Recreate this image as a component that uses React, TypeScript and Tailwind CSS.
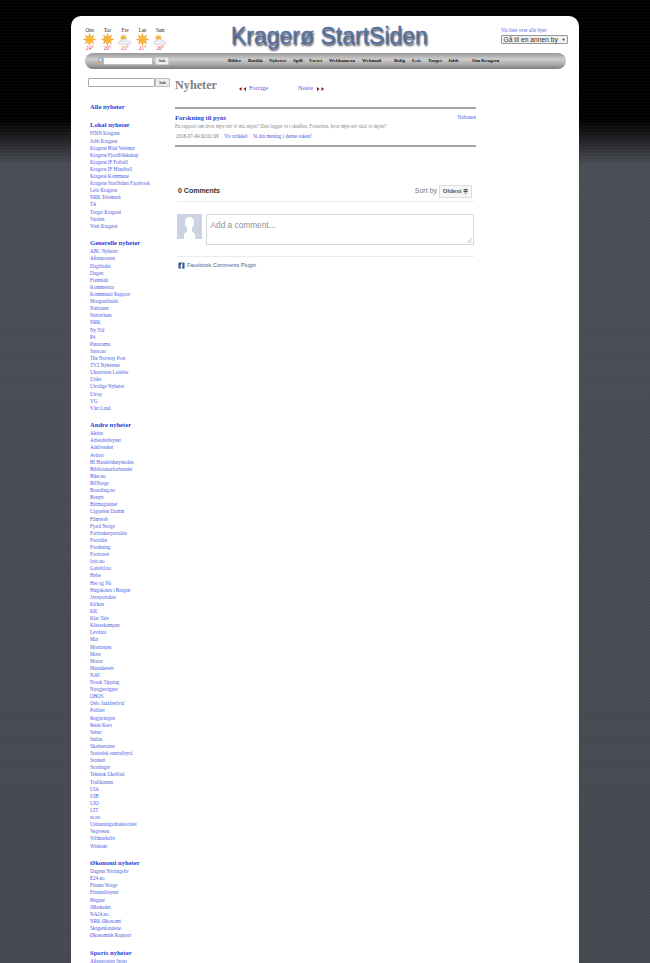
import { FaFacebookSquare } from 'react-icons/fa'

const lokal = ['FINN Kragerø', 'Jobb Kragerø', 'Kragerø Blad Vestmar', 'Kragerø Fjordblikkskap', 'Kragerø IF Fotball', 'Kragerø IF Håndball', 'Kragerø Kommune', 'Kragerø StartSiden Facebook', 'Lele Kragerø', 'NRK Telemark', 'TA', 'Torget Kragerø', 'Varden', 'Visit Kragerø']
const generelle = ['ABC Nyheter', 'Aftenposten', 'Dagbladet', 'Dagen', 'Fremtida', 'Kommentar', 'Kommunal Rapport', 'Morgenbladet', 'Nationen', 'Nettavisen', 'NRK', 'Ny Tid', 'P4', 'Panorama', 'Siste.no', 'The Norway Post', 'TV2 Nyhetene', 'Ukeavisen Ledelse', 'Uriks', 'Utrolige Nyheter', 'Utrop', 'VG', 'Vårt Land']
const andre = ['Aktiss', 'Arbeidstilsynet', 'Arkitverket', 'Avinor', 'BI Handelshøyskolen', 'Bibliotekarforbundet', 'Bike.no', 'BilNorge', 'Boarding.no', 'Bonytt', 'Båtmagasinet', 'Cappelen Damm', 'Filmweb', 'Fjord Norge', 'Forbrukerportalen', 'Foreldre', 'Forskning', 'Forsvaret', 'foto.no', 'Gatebil.no', 'Hebe', 'Her og Nå', 'Høgskolen i Bergen', 'Jæreportalen', 'Kirken', 'KK', 'Klar Tale', 'Klassekampen', 'Levdata', 'Mat', 'Montasjen', 'Mote', 'Motor', 'Musikkweb', 'NAV', 'Norsk Tipping', 'Nysgjerrigper', 'OBOS', 'Oslo Jazzfestival', 'Politiet', 'Regjeringen', 'Røde Kors', 'Seher', 'Snilas', 'Skatteetaten', 'Statistisk sentralbyrå', 'Statnett', 'Stortinget', 'Teknisk Ukeblad', 'Trafikanten', 'UIA', 'UIB', 'UIO', 'UIT', 'ut.no', 'Utdanningsdirektoratet', 'Vegvesen', 'Villmarksliv', 'Widerøe']
const okonomi = ['Dagens Næringsliv', 'E24.no', 'Finans Norge', 'Finanstilsynet', 'Hegnar', 'iMarkedet', 'NA24.no', 'NRK Økonomi', 'Skagenfondene', 'Økonomisk Rapport']
const sport = ['Aftenposten Sport']

const weather = [
    { day: 'Ons', temp: '24°', cloudy: false },
    { day: 'Tor', temp: '20°', cloudy: false },
    { day: 'Fre', temp: '21°', cloudy: true },
    { day: 'Lør', temp: '21°', cloudy: false },
    { day: 'Søn', temp: '20°', cloudy: true },
]

const nav = [
    { label: 'Bilder', cls: 'w-[20px]' },
    { label: 'Butikk', cls: 'w-[21px]' },
    { label: 'Nyheter', cls: 'w-[24px]' },
    { label: 'Spill', cls: 'w-[16px]' },
    { label: 'Været', cls: 'w-[20px]' },
    { label: 'Webkamera', cls: 'w-[33px]' },
    { label: 'Webmail', cls: 'w-[32px]' },
    { label: 'Bolig', cls: 'w-[18px]' },
    { label: 'Leie', cls: 'w-[16px]' },
    { label: 'Torget', cls: 'w-[20px]' },
    { label: 'Jobb', cls: 'w-[24px]' },
    { label: 'Om Kragerø', cls: 'w-[40px]' },
]

const WeatherIcon = ({ cloudy }: { cloudy: boolean }) => {
    const rays = [0, 45, 90, 135, 180, 225, 270, 315]
    if (cloudy) {
        return (
            <svg width="14" height="13" viewBox="0 0 14 12">
                <circle cx="5.5" cy="4.5" r="2.6" fill="#f5b335" />
                {rays.map((r) => (
                    <path key={r} d="M5.5 0.4 L6.1 1.6 L4.9 1.6 Z" fill="#f0a830" transform={`rotate(${r} 5.5 4.5)`} />
                ))}
                <path d="M2.5 11 Q0.5 11 0.7 9 Q1 7.3 3 7.5 Q3.8 5.2 6.5 5.4 Q9 5.6 9.5 7.2 Q12.8 6.8 13.3 9.2 Q13.4 11 11.5 11 Z" fill="#eceef1" stroke="#c3c7cf" strokeWidth="0.5" />
            </svg>
        )
    }
    return (
        <svg width="13" height="13" viewBox="0 0 12 12">
            {rays.map((r) => (
                <path key={r} d="M6 0 L7.1 2.6 L4.9 2.6 Z" fill="#f2a32c" transform={`rotate(${r} 6 6)`} />
            ))}
            <circle cx="6" cy="6" r="3.5" fill="#f6b73c" />
        </svg>
    )
}

const Arrows = ({ dir }: { dir: 'left' | 'right' }) => (
    <svg width="7" height="4" viewBox="0 0 7 4" className="mt-[2.5px]">
        {dir === 'left' ? (
            <path d="M0 2 L2.5 0 V4 Z M4.5 2 L7 0 V4 Z" fill="#8b1a1a" />
        ) : (
            <path d="M2.5 2 L0 0 V4 Z M7 2 L4.5 0 V4 Z" fill="#8b1a1a" />
        )}
    </svg>
)

const Group = ({ title, items }: { title: string; items: string[] }) => (
    <div className="mb-[8.4px]">
        <h3 className="text-[6.6px] leading-[9px] font-bold text-[#2a3fd6]">{title}</h3>
        <ul className="pt-[1px]">
            {items.map((item) => (
                <li key={item} className="text-[5.05px] leading-[7.11px] text-[#4a5ce0] whitespace-nowrap">{item}</li>
            ))}
        </ul>
    </div>
)

export default function App() {
    return (
        <div className="h-[963px] overflow-hidden bg-[repeating-linear-gradient(to_bottom,rgba(255,255,255,0.025)_0px,rgba(255,255,255,0.025)_1px,transparent_1px,transparent_3px),linear-gradient(to_bottom,#000_0px,#000_120px,#4a4d55_165px,#45484f_100%)] pt-4 pl-[71px] font-['Liberation_Serif',serif]">
            <div className="w-[508px] h-[947px] bg-white rounded-t-[10px] overflow-hidden">
                {/* top row */}
                <div className="h-[37px] flex pl-[10px]">
                    <div className="flex w-[88px] pt-[11px]">
                        {weather.map((w) => (
                            <div key={w.day} className="w-[17.7px] flex flex-col items-center">
                                <span className="text-[5.3px] leading-[6px] text-[#222]">{w.day}</span>
                                <div className="h-[12px] flex items-center">
                                    <WeatherIcon cloudy={w.cloudy} />
                                </div>
                                <span className="text-[5.3px] leading-[6px] text-[#d33]">{w.temp}</span>
                            </div>
                        ))}
                    </div>
                    <div className="w-[332px] pl-[62px] pt-[3px]">
                        <span className="text-[23px] leading-[34px] text-[#56719f] whitespace-nowrap font-['Liberation_Sans',sans-serif] [-webkit-text-stroke:0.4px_#56719f] [text-shadow:1px_2px_2px_#3f434c]">Kragerø StartSiden</span>
                    </div>
                    <div className="pt-[11px]">
                        <p className="text-[5.05px] leading-[6px] text-[#4a5ce0] whitespace-nowrap">Vis liste over alle byer</p>
                        <div className="mt-[2px] w-[67px] h-[9px] bg-[#efefef] border border-[#999] rounded-[1px] flex items-center justify-between px-[1.5px] text-[6.7px] leading-[7px] font-['Liberation_Sans',sans-serif] text-[#333] whitespace-nowrap">
                            <span>Gå til en annen by</span>
                            <span className="text-[4px]">▼</span>
                        </div>
                    </div>
                </div>

                {/* nav bar */}
                <div className="ml-[14px] w-[481px] h-4 rounded-full bg-[linear-gradient(to_bottom,#999,#cdcdcd_40%,#ababab_70%,#7d7d7d)] flex items-center">
                    <div className="w-[143px] flex items-center pl-[11px]">
                        <svg width="7" height="9" viewBox="0 0 7 9">
                            <circle cx="4.6" cy="2.8" r="2" fill="#d6e8f7" stroke="#5f86ad" strokeWidth="0.7" />
                            <path d="M3.2 4.4 L0.8 8" stroke="#e3a64b" strokeWidth="1.2" />
                        </svg>
                        <div className="w-[50px] h-[8px] bg-white border border-[#bbb]" />
                        <div className="ml-[2px] w-[14px] h-[8px] bg-[#eee] border border-[#ccc] text-[4.5px] leading-[6px] text-center">Søk</div>
                    </div>
                    <div className="flex">
                        {nav.map((n) => (
                            <span key={n.label} className={`${n.cls} text-[5px] font-bold text-[#111] whitespace-nowrap`}>{n.label}</span>
                        ))}
                    </div>
                </div>

                <div className="flex pt-[9px]">
                    {/* sidebar */}
                    <aside className="w-[104px] pl-[17px] shrink-0">
                        <div className="flex h-[9px]">
                            <div className="w-[67px] h-[9px] bg-white border border-[#aaa] rounded-[1px]" />
                            <div className="w-[15px] h-[9px] bg-[#eee] border border-[#bbb] rounded-[1px] text-[4.5px] leading-[7px] text-center">Søk</div>
                        </div>
                        <div className="pt-[15px] pl-[2px]">
                            <Group title="Alle nyheter" items={[]} />
                            <Group title="Lokal nyheter" items={lokal} />
                            <Group title="Generelle nyheter" items={generelle} />
                            <Group title="Andre nyheter" items={andre} />
                            <Group title="Økonomi nyheter" items={okonomi} />
                            <Group title="Sports nyheter" items={sport} />
                        </div>
                    </aside>

                    {/* main */}
                    <main className="w-[301px]">
                        <div className="flex items-start h-[29px]">
                            <h1 className="text-[12.2px] leading-[14px] font-bold text-[#808080] w-[64px]">Nyheter</h1>
                            <div className="flex gap-[3px] pt-[6px] w-[59px] text-[6.5px] leading-[8px] text-[#4a5ce0]">
                                <Arrows dir="left" /> <span>Forrige</span>
                            </div>
                            <div className="flex gap-[4px] pt-[6px] text-[6.5px] leading-[8px] text-[#4a5ce0]">
                                <span>Neste</span> <Arrows dir="right" />
                            </div>
                        </div>
                        <div className="h-[40px] border-y-2 border-[#a3a3a3] pt-[4px]">
                            <div className="flex justify-between">
                                <h2 className="text-[6.6px] leading-[10px] font-bold text-[#2a3fd6]">Forskning til pynt</h2>
                                <span className="text-[5.05px] leading-[8px] text-[#4a5ce0]">Nationen</span>
                            </div>
                            <p className="text-[5.05px] leading-[7px] text-[#888]">En rapport om hvor mye utv vi må skyte? Den legger vi i skuffen. Forsetten, hvor mye utv skal vi skyte?</p>
                            <div className="flex pl-[1px] pt-[2.5px] text-[5.05px] leading-[7px] text-[#4a5ce0]">
                                <span className="text-[#777] w-[48px]">2018-07-04 02:01:09</span>
                                <span className="w-[29px]">Vis artikkel</span>
                                <span>Si din mening i denne saken!</span>
                            </div>
                        </div>

                        {/* comments */}
                        <div className="pt-[37px] pl-[2px] pr-[2px] font-['Liberation_Sans',sans-serif]">
                            <div className="flex justify-between items-center h-[14px] pl-[1px] pr-[2px]">
                                <span className="text-[7px] font-bold text-[#333]">0 Comments</span>
                                <div className="flex items-center gap-[2px]">
                                    <span className="text-[7px] text-[#777]">Sort by</span>
                                    <span className="w-[33px] h-[13px] bg-[#f5f6f7] border border-[#ddd] text-[6px] font-bold leading-[11px] text-center text-[#555]">Oldest ≑</span>
                                </div>
                            </div>
                            <div className="mt-[3px] border-t border-[#e9ebee] pt-3 flex gap-[4px]">
                                <div className="w-[25px] h-[25px] bg-[#ccd4e4] overflow-hidden">
                                    <svg viewBox="0 0 25 25" width="25" height="25">
                                        <path d="M7 25 V20 L10 17.5 V14 Q7.5 11 8 7.5 Q8.8 3 12.5 3 Q16.2 3 17 7.5 Q17.5 11 15 14 V17.5 L18 20 V25 Z" fill="#fff" />
                                    </svg>
                                </div>
                                <div className="flex-1 h-[31px] border border-[#d5d8de] rounded-[1px] px-[3.5px] py-[5px] text-[8.3px] leading-[10px] text-[#8f949c] relative">
                                    Add a comment...
                                    <svg width="5" height="5" viewBox="0 0 5 5" className="absolute right-[1px] bottom-[1px]">
                                        <path d="M0 5 L5 0 M2.5 5 L5 2.5" stroke="#888" strokeWidth="0.5" />
                                    </svg>
                                </div>
                            </div>
                            <div className="mt-[11px] border-t border-[#e9ebee] pt-[5px] pl-[1px] flex items-center gap-[2px] text-[5.5px] leading-[7px] text-[#4d5f91]">
                                <FaFacebookSquare className="w-[7px] h-[7px] text-[#3b5998]" />
                                <span>Facebook Comments Plugin</span>
                            </div>
                        </div>
                    </main>
                </div>
            </div>
        </div>
    )
}
